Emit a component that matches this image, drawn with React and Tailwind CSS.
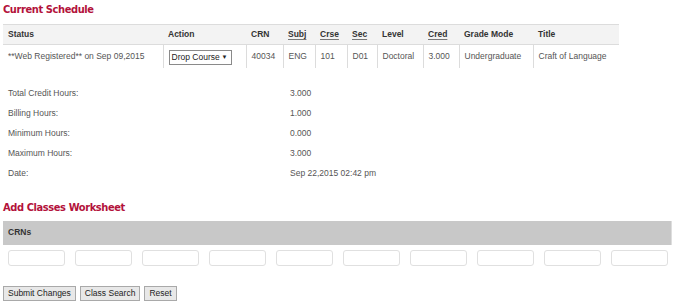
import React from 'react';

const columns = [
  { key: 'status', label: 'Status', width: 160 },
  { key: 'action', label: 'Action', width: 83 },
  { key: 'crn', label: 'CRN', width: 37 },
  { key: 'subj', label: 'Subj', width: 32, abbr: true },
  { key: 'crse', label: 'Crse', width: 32, abbr: true },
  { key: 'sec', label: 'Sec', width: 30, abbr: true },
  { key: 'level', label: 'Level', width: 46 },
  { key: 'cred', label: 'Cred', width: 36, abbr: true },
  { key: 'mode', label: 'Grade Mode', width: 74 },
  { key: 'title', label: 'Title', width: 86 },
];

const summary = [
  ['Total Credit Hours:', '3.000'],
  ['Billing Hours:', '1.000'],
  ['Minimum Hours:', '0.000'],
  ['Maximum Hours:', '3.000'],
  ['Date:', 'Sep 22,2015 02:42 pm'],
];

function Heading({ children }) {
  return (
    <h2 className="h-[20px] pl-[3px] flex items-center font-bold text-[11px] tracking-[-0.4px] text-[#b3123b] font-['DejaVu_Sans_Condensed','DejaVu_Sans',sans-serif]">
      {children}
    </h2>
  );
}

function DropSelect() {
  return (
    <div className="inline-flex items-center justify-between w-[63px] h-[15px] border border-[#8a8a8a] bg-white pl-[2px] pr-[3px] text-[#222] mt-[2px] whitespace-nowrap">
      <span>Drop Course</span>
      <span className="text-[6px]">▼</span>
    </div>
  );
}

export default function App() {
  return (
    <div className="w-[681px] h-[308px] bg-white font-['Liberation_Sans',Arial,sans-serif] text-[8.5px] text-[#555] overflow-hidden">
      <Heading>Current Schedule</Heading>

      <table className="ml-[3px] mt-[4px] w-[616px] table-fixed border-collapse">
        <colgroup>
          {columns.map((c) => (
            <col key={c.key} style={{ width: c.width }} />
          ))}
        </colgroup>
        <thead>
          <tr className="bg-[#f3f3f3] border-t border-b border-[#dcdcdc]">
            {columns.map((c) => (
              <th key={c.key} className="h-[20px] pl-[5px] text-left font-bold text-[#333]">
                {c.abbr ? (
                  <span className="underline decoration-[#777] underline-offset-[2px]">{c.label}</span>
                ) : (
                  c.label
                )}
              </th>
            ))}
          </tr>
        </thead>
        <tbody>
          <tr className="h-[23px]">
            <td className="pl-[5px] pt-[1px]">**Web Registered** on Sep 09,2015</td>
            <td className="pl-[5px] border-l border-[#dcdcdc]">
              <DropSelect />
            </td>
            <td className="pl-[5px] pt-[1px] border-l border-[#dcdcdc]">40034</td>
            <td className="pl-[5px] pt-[1px] border-l border-[#dcdcdc]">ENG</td>
            <td className="pl-[5px] pt-[1px] border-l border-[#dcdcdc]">101</td>
            <td className="pl-[5px] pt-[1px] border-l border-[#dcdcdc]">D01</td>
            <td className="pl-[5px] pt-[1px] border-l border-[#dcdcdc]">Doctoral</td>
            <td className="pl-[5px] pt-[1px] border-l border-[#dcdcdc]">3.000</td>
            <td className="pl-[5px] pt-[1px] border-l border-[#dcdcdc]">Undergraduate</td>
            <td className="pl-[5px] pt-[1px] border-l border-[#dcdcdc] whitespace-nowrap">Craft of Language</td>
          </tr>
        </tbody>
      </table>

      <div className="mt-[16px] pl-[8px]">
        {summary.map(([label, value]) => (
          <div key={label} className="flex items-center h-[20px]">
            <span className="w-[282px]">{label}</span>
            <span>{value}</span>
          </div>
        ))}
      </div>

      <div className="mt-[15px]">
        <Heading>Add Classes Worksheet</Heading>
      </div>

      <div className="mx-[3px] mt-[2px] w-[669px] h-[24px] bg-[#c8c8c8] border-r border-[#dedede] flex items-center pl-[5px] font-bold text-[#333]">
        CRNs
      </div>

      <div className="flex gap-[10px] pl-[8px] mt-[5px]">
        {Array.from({ length: 10 }).map((_, i) => (
          <div key={i} className="w-[57px] h-[16px] border border-[#e0e0e0] rounded-[3px] bg-white" />
        ))}
      </div>

      <div className="flex gap-[4px] pl-[3px] mt-[20px]">
        {['Submit Changes', 'Class Search', 'Reset'].map((b) => (
          <button
            key={b}
            className="h-[15px] px-[4px] bg-[#e8e8e8] border border-[#a9a9a9] text-[#222] text-[8.5px] leading-none"
          >
            {b}
          </button>
        ))}
      </div>
    </div>
  );
}
